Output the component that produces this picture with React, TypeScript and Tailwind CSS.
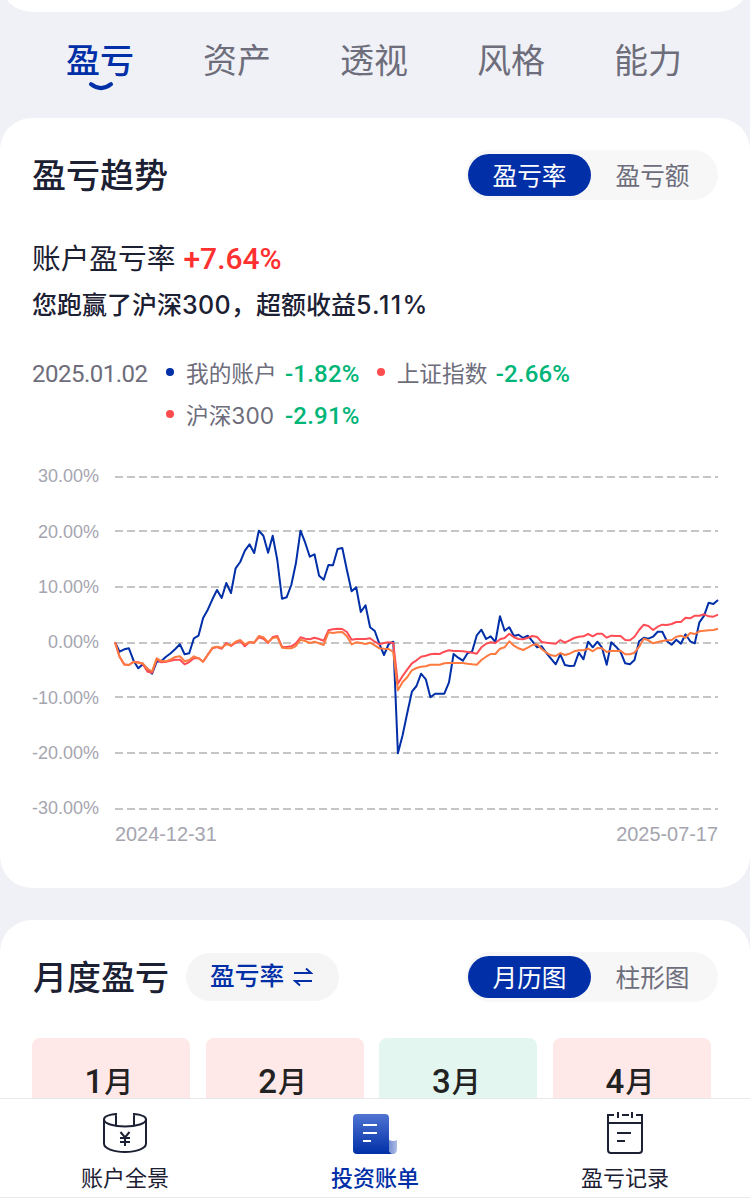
import clsx from "clsx";

const tabs = ["盈亏", "资产", "透视", "风格", "能力"];

const months = [
  { month: 1, profit: true },
  { month: 2, profit: true },
  { month: 3, profit: false },
  { month: 4, profit: true },
];

const axisLabels = ["30.00%", "20.00%", "10.00%", "0.00%", "-10.00%", "-20.00%", "-30.00%"];
const gridLines = [7, 61, 117, 173, 227, 283, 339];

// one value per trading day, in thirds of a pixel below the 24% level
const account = [
  397, 425, 418, 415, 452, 475, 463, 477, 491, 455, 453, 440, 430, 417, 403, 433, 430, 385, 377, 324, 299, 268,
  240, 264, 219, 249, 175, 156, 122, 103, 129, 62, 77, 128, 77, 150, 266, 262, 225, 160, 62, 98, 140, 133, 197,
  209, 165, 166, 117, 114, 180, 244, 232, 306, 286, 352, 363, 402, 435, 402, 395, 730, 676, 610, 545, 528, 491,
  508, 562, 551, 551, 551, 517, 432, 443, 452, 430, 424, 376, 359, 387, 379, 396, 319, 362, 352, 378, 374, 384,
  377, 394, 412, 409, 429, 446, 463, 433, 465, 468, 467, 428, 448, 395, 412, 395, 413, 464, 397, 410, 426, 460,
  463, 450, 394, 383, 386, 380, 365, 365, 394, 404, 389, 401, 373, 394, 400, 337, 317, 278, 282, 270,
];
const shanghai = [
  397, 440, 463, 465, 455, 457, 462, 485, 488, 448, 457, 455, 452, 449, 449, 463, 456, 445, 444, 455, 434, 415,
  411, 416, 399, 408, 398, 393, 409, 396, 398, 382, 386, 399, 381, 378, 410, 411, 409, 400, 382, 386, 388, 383,
  387, 392, 361, 358, 356, 357, 366, 389, 387, 387, 387, 385, 395, 403, 399, 397, 399, 521, 498, 479, 460, 451,
  440, 437, 433, 431, 432, 425, 421, 423, 423, 424, 426, 428, 431, 412, 401, 397, 399, 388, 384, 371, 382, 387,
  388, 383, 378, 381, 396, 398, 400, 401, 390, 398, 391, 384, 380, 379, 372, 379, 371, 371, 383, 377, 378, 378,
  390, 391, 380, 360, 344, 348, 360, 350, 344, 345, 342, 336, 336, 323, 325, 317, 317, 313, 319, 320, 314,
];
const csi300 = [
  397, 440, 464, 465, 456, 458, 460, 477, 484, 445, 453, 454, 448, 441, 439, 454, 450, 439, 445, 455, 434, 413,
  410, 413, 403, 406, 395, 390, 403, 396, 398, 378, 382, 397, 384, 382, 413, 415, 415, 408, 389, 393, 399, 395,
  400, 405, 367, 369, 367, 366, 379, 403, 397, 399, 402, 398, 406, 415, 416, 417, 426, 541, 516, 502, 481, 474,
  470, 469, 464, 464, 464, 460, 459, 459, 459, 459, 461, 463, 464, 450, 440, 432, 432, 416, 412, 394, 407, 415,
  420, 413, 405, 403, 417, 428, 436, 438, 429, 435, 431, 424, 421, 421, 416, 424, 414, 415, 426, 422, 423, 422,
  433, 433, 428, 410, 386, 391, 400, 396, 393, 391, 390, 380, 377, 383, 369, 372, 364, 362, 361, 360, 356,
];

const toPoints = (values: number[]) =>
  values.map((v, i) => `${((i * 603) / (values.length - 1)).toFixed(1)},${(v / 3 + 40).toFixed(1)}`).join(" ");

const Toggle = ({ options }: { options: string[] }) => (
  <div className="flex h-[50px] w-[252px] items-center rounded-full bg-[#f7f7f8] pl-0.5 text-[24.7px] text-[#6d6d7b]">
    {options.map((option, i) => (
      <button
        key={option}
        className={clsx("h-[42px] w-[123px] rounded-full leading-[44px]", i === 0 && "bg-[#002fa7] text-white")}
      >
        {option}
      </button>
    ))}
  </div>
);

interface LegendItemProps {
  name: string;
  value: string;
  dot: string;
}

const LegendItem = ({ name, value, dot }: LegendItemProps) => (
  <div className="flex items-center">
    <span className={clsx("mr-3 -mt-1 size-2 rounded-full", dot)} />
    <span className="mr-2 min-w-[91px] text-[22.7px]">{name}</span>
    <span className="font-[Roboto] text-2xl font-medium tracking-[0.2px] text-[#00b578]">{value}</span>
  </div>
);

const TrendChart = () => (
  <div className="mt-[33px]">
    <div className="flex h-[346px] items-start">
      <div className="flex w-[67px] flex-col pt-[7px] text-right font-['Liberation_Sans'] text-lg leading-[55.3px] text-[#a5a5af]">
        {axisLabels.map((label) => (
          <span key={label} className="-mt-[27.65px] mb-[27.65px] h-[55.3px]">
            {label}
          </span>
        ))}
      </div>
      <svg className="ml-4 h-[346px] w-[603px] overflow-visible" viewBox="0 0 603 346" fill="none">
        {gridLines.map((y) => (
          <path key={y} d={`M0 ${y}H603`} stroke="#c5c5c5" strokeWidth="2" strokeDasharray="8 4" />
        ))}
        <g strokeWidth="2" strokeLinejoin="round">
          <polyline points={toPoints(account)} stroke="#002fa7" />
          <polyline points={toPoints(shanghai)} stroke="#ff4d55" />
          <polyline points={toPoints(csi300)} stroke="#ff7a40" />
        </g>
      </svg>
    </div>
    <div className="mt-1.5 ml-[83px] flex justify-between font-['Liberation_Sans'] text-[19.9px] leading-6 text-[#a5a5af]">
      <span>2024-12-31</span>
      <span>2025-07-17</span>
    </div>
  </div>
);

const PanoramaIcon = () => (
  <svg className="h-11 w-12" viewBox="0 0 48 44" fill="none" stroke="#1c2033" strokeWidth="2">
    <path d="M16 4C8 4.600 3 6.600 3 9.500v24C3 38.400 12.400 42 24 42s21-3.600 21-8.500v-24C45 6.600 40 4.600 32 4M15 3v12M33 3v12" />
    <path d="M3 9.500c0 4 9.400 7 21 7s21-3 21-7" />
    <path d="M19.500 22l4.500 5.500 4.500-5.500M24 27v9M19 28h10M19 32h10" />
  </svg>
);

const BillIcon = () => (
  <svg className="h-11 w-12" viewBox="0 0 48 44" fill="none">
    <defs>
      <linearGradient id="bill" x1="0" y1="0" x2="0" y2="1">
        <stop stopColor="#5074d2" />
        <stop offset="1" stopColor="#002fa7" />
      </linearGradient>
      <linearGradient id="curl" x1="0" y1="0" x2="1" y2="0">
        <stop stopColor="#7790d2" />
        <stop offset="1" stopColor="#afbde5" />
      </linearGradient>
    </defs>
    <path d="M6 4h28a4 4 0 0 1 4 4v31c0 2.500 1.500 4.500 4 5H6a4 4 0 0 1-4-4V8a4 4 0 0 1 4-4z" fill="url(#bill)" />
    <path d="M38 30c3 1.300 5.500 1.300 8 0v9c0 3-1.500 5-4 5s-4-2-4-5z" fill="url(#curl)" />
    <path d="M12 15h14M12 23h14M12 31h8" stroke="#fff" strokeWidth="2" />
  </svg>
);

const RecordIcon = () => (
  <svg className="h-11 w-12" viewBox="0 0 48 44" fill="none" stroke="#1c2033" strokeWidth="2">
    <path d="M13 5H7v35a3 3 0 0 0 3 3h28a3 3 0 0 0 3-3V5h-6M21 5h7M7 13h34M17 2v6M31 2v6M16 23h14M16 31h8" />
  </svg>
);

const navItems = [
  { label: "账户全景", icon: PanoramaIcon },
  { label: "投资账单", icon: BillIcon, active: true },
  { label: "盈亏记录", icon: RecordIcon },
];

const App = () => {
  return (
    <div className="flex h-[1198px] w-[750px] flex-col overflow-hidden bg-[#f0f1f6] font-['Inter','Noto_Sans_CJK_SC',sans-serif] text-[#1c2033]">
      <div className="-mt-13 h-16 shrink-0 rounded-b-[32px] bg-white" />

      <div className="flex h-[106px] shrink-0 justify-between pt-6 pr-[68px] pl-[66px] text-[34px] leading-[50px] text-[#6d6d7b]">
        {tabs.map((tab, i) => (
          <div key={tab} className={clsx("flex flex-col items-center", i === 0 && "font-medium text-[#002fa7]")}>
            {tab}
            {i === 0 && (
              <svg className="-mt-[5px] ml-0.5 h-[10px] w-[26px]" viewBox="0 0 26 10" fill="none">
                <path d="M3 3.200Q13 11 23 3.200" stroke="#002fa7" strokeWidth="4" strokeLinecap="round" />
              </svg>
            )}
          </div>
        ))}
      </div>

      <section className="h-[770px] shrink-0 rounded-[32px] bg-white px-8 pt-8">
        <div className="flex h-[50px] items-center justify-between">
          <h2 className="text-[34px] font-medium">盈亏趋势</h2>
          <Toggle options={["盈亏率", "盈亏额"]} />
        </div>
        <p className="mt-[37px] text-[28.7px] leading-[44px]">
          账户盈亏率
          <span className="ml-2 font-[Roboto] text-[30px] font-medium text-[#ff3030]">+7.64%</span>
        </p>
        <p className="mt-1 text-[25px] leading-10 font-medium">
          您跑赢了沪深<span className="tracking-[0.3px]">300</span>，超额收益
          <span className="tracking-[1.4px]">5.11%</span>
        </p>
        <div className="mt-7 flex text-[#6d6d7b]">
          <span className="w-[134px] shrink-0 font-[Roboto] text-2xl leading-[42px] tracking-[-0.5px]">
            2025.01.02
          </span>
          <div className="flex flex-wrap gap-x-[17px] leading-[42px]">
            <LegendItem name="我的账户" value="-1.82%" dot="bg-[#002fa7]" />
            <LegendItem name="上证指数" value="-2.66%" dot="bg-[#ff4d4f]" />
            <LegendItem name="沪深300" value="-2.91%" dot="bg-[#ff4d4f]" />
          </div>
        </div>
        <TrendChart />
      </section>

      <section className="mt-8 h-[178px] shrink-0 overflow-hidden rounded-t-[32px] bg-white px-8 pt-8">
        <div className="flex h-[50px] items-center">
          <h2 className="ml-px text-[34px] font-medium">月度盈亏</h2>
          <button className="mr-auto ml-[17px] flex h-12 w-[153px] items-center gap-[9px] rounded-full bg-[#f5f5f6] pl-6 text-[24.7px] font-medium text-[#002fa7]">
            盈亏率
            <svg className="h-5 w-5" viewBox="0 0 20 20" fill="none" stroke="#002fa7" strokeWidth="2">
              <path d="M1 6h17l-5-4.500M19 14H2l5 4.500" />
            </svg>
          </button>
          <Toggle options={["月历图", "柱形图"]} />
        </div>
        <div className="mt-9 mr-[7px] grid grid-cols-4 gap-x-[15.7px]">
          {months.map(({ month, profit }) => (
            <div
              key={month}
              className={clsx(
                "h-[140px] rounded-lg pt-5 pr-1 text-center text-[29px] leading-[48px] font-medium text-[#222]",
                profit ? "bg-[#ffe8e8]" : "bg-[#e4f6f0]"
              )}
            >
              <span className="mr-px font-[Roboto] text-[33px]">{month}</span>月
            </div>
          ))}
        </div>
      </section>

      <nav className="grid h-[100px] shrink-0 grid-cols-3 border-y border-[#e6e8ee] bg-white">
        {navItems.map(({ label, icon: Icon, active }) => (
          <div
            key={label}
            className={clsx("flex flex-col items-center pt-[11px] text-[22px]", active && "font-medium text-[#002fa7]")}
          >
            <Icon />
            <span className="mt-2 leading-8">{label}</span>
          </div>
        ))}
      </nav>
    </div>
  );
};

export default App;
